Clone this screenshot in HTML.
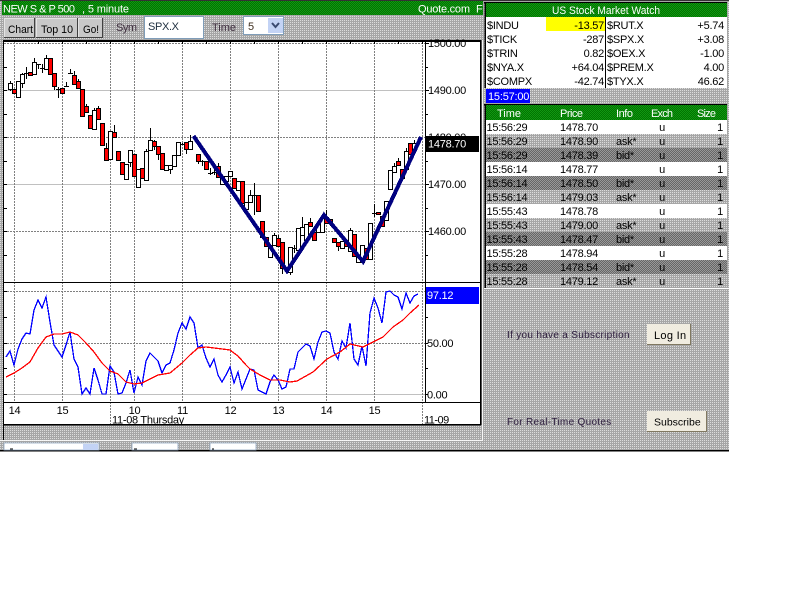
<!DOCTYPE html>
<html><head><meta charset="utf-8"><title>NEW S &amp; P 500</title>
<style>
html,body{margin:0;padding:0;background:#fff;width:800px;height:600px;overflow:hidden}
svg{display:block;position:absolute;left:0;top:0}
text{font-family:"Liberation Sans",sans-serif;font-size:11px;fill:#000}
.w{fill:#fff}
.r{text-anchor:end}
.m{text-anchor:middle}
.t text{letter-spacing:-.25px}
</style></head><body>
<svg width="800" height="600" viewBox="0 0 800 600">
<defs>
<pattern id="g" width="2" height="2" patternUnits="userSpaceOnUse"><rect width="2" height="2" fill="#a6a6a6"/><rect width="1" height="1" fill="#dcdcdc"/></pattern>
<pattern id="d" width="2" height="2" patternUnits="userSpaceOnUse"><rect width="2" height="2" fill="#666"/><rect width="1" height="1" fill="#999"/><rect x="1" y="1" width="1" height="1" fill="#999"/></pattern>
<pattern id="gr" width="2" height="2" patternUnits="userSpaceOnUse"><rect width="2" height="2" fill="#007400"/><rect width="1" height="1" fill="#129612"/><rect x="1" y="1" width="1" height="1" fill="#129612"/></pattern>
<clipPath id="pc"><rect x="4" y="41" width="476" height="383"/></clipPath>
</defs>

<rect width="729" height="451" fill="url(#g)"/>
<rect y="450" width="729" height="1.5" fill="#000"/>
<rect x="0" y="0" width="729" height="1" fill="#333"/>

<!-- top bar -->
<rect x="2" y="1" width="481" height="14" fill="url(#gr)"/>
<text class="w" x="3" y="12.5" textLength="72" lengthAdjust="spacing">NEW S &amp; P 500</text>
<text class="w" x="82" y="12.5" textLength="47" lengthAdjust="spacing">, 5 minute</text>
<text class="w" x="418" y="12.5" textLength="52" lengthAdjust="spacing">Quote.com</text>
<text class="w" x="476" y="12.5">F</text>

<!-- toolbar buttons -->
<g stroke="none">
<rect x="4" y="18" width="31" height="20" fill="#404040"/><rect x="4" y="18" width="30" height="19" fill="#e4e4e4"/><rect x="5" y="19" width="29" height="18" fill="#c8c8c8"/>
<rect x="36" y="18" width="42" height="20" fill="#404040"/><rect x="36" y="18" width="41" height="19" fill="#e4e4e4"/><rect x="37" y="19" width="40" height="18" fill="#c8c8c8"/>
<rect x="78" y="18" width="25" height="20" fill="#404040"/><rect x="78" y="18" width="24" height="19" fill="#e4e4e4"/><rect x="79" y="19" width="23" height="18" fill="#c8c8c8"/>
</g>
<text x="8" y="33" textLength="25" lengthAdjust="spacingAndGlyphs">Chart</text>
<text x="41" y="33" textLength="32" lengthAdjust="spacingAndGlyphs">Top 10</text>
<text x="83" y="33" textLength="16" lengthAdjust="spacingAndGlyphs">Go!</text>
<text x="116" y="31" style="fill:#403040" textLength="21" lengthAdjust="spacing">Sym</text>
<rect x="144.5" y="16.5" width="59" height="22" fill="#fff" stroke="#7f9db9"/>
<text x="148" y="30" style="fill:#203040" textLength="31" lengthAdjust="spacing">SPX.X</text>
<text x="212" y="31" style="fill:#403040" textLength="24" lengthAdjust="spacing">Time</text>
<rect x="243.5" y="16.5" width="40" height="18" fill="#fff" stroke="#7f9db9"/>
<text x="248" y="30" style="fill:#403020">5</text>
<rect x="268" y="18" width="15" height="15" fill="#c3d3f5"/>
<path d="M272 23l3.5 4 3.5-4" fill="none" stroke="#3a4a70" stroke-width="2"/>

<!-- chart -->
<rect x="3" y="40" width="478" height="385" fill="#fff"/>
<rect x="3" y="40" width="1" height="400" fill="#000"/>
<rect x="3" y="40" width="478" height="2" fill="#000"/>
<rect x="480" y="40" width="1.5" height="385" fill="#000"/>
<rect x="425" y="40" width="1" height="362" fill="#000"/>

<!-- grid -->
<g fill="none" stroke="#c0c0c0" stroke-width="1">
<path d="M4 90.5H425M4 184.5H425M4 394.5H425"/>
</g>
<g fill="none" stroke="#808080" stroke-width="1" stroke-dasharray="2 1">
<path d="M4 43.5H425M4 137.5H425M4 231.5H425M4 291.5H425M4 343.5H425"/>
<path d="M14.5 42V402M62.5 42V402M110.5 42V424M134.5 42V402M182.5 42V402M230.5 42V402M278.5 42V402M326.5 42V402M374.5 42V402M422.5 42V424"/>
</g>
<!-- axis ticks -->
<path d="M425 43.5h4M425 67.5h3M425 90.5h4M425 114.5h3M425 137.5h4M425 161.5h3M425 184.5h4M425 208.5h3M425 231.5h4M425 255.5h3M425 291.5h3M425 317.5h3M425 343.5h3M425 368.5h3M425 394.5h3M4 67.5h3M4 90.5h3M4 114.5h3M4 137.5h3M4 161.5h3M4 184.5h3M4 208.5h3M4 231.5h3M4 255.5h3M4 291.5h3M4 317.5h3M4 343.5h3M4 368.5h3M4 394.5h3M38.5 42v2M62.5 42v2M86.5 42v2M110.5 42v2M134.5 42v2M158.5 42v2M182.5 42v2M206.5 42v2M230.5 42v2M254.5 42v2M278.5 42v2M302.5 42v2M326.5 42v2M350.5 42v2M374.5 42v2M398.5 42v2M422.5 42v2" stroke="#000" fill="none"/>

<!-- wicks -->
<path fill="none" stroke="#000" d="M10.5 81V91M22.5 73V88M34.5 58V62M46.5 55V58M54.5 86V90M74.5 71V75M78.5 79V81M86.5 104V106M94.5 108V110M98.5 106V108M106.5 143V148M114.5 125V132M130.5 162V167M146.5 149V151M150.5 128V140M154.5 140V150M158.5 154V160M170.5 169V174M186.5 149V154M190.5 135V141M198.5 161V164M218.5 163V166M250.5 190V195M274.5 233V235M278.5 235V238M282.5 268V274M290.5 272V275M302.5 217V227M310.5 218V222M326.5 210V217M330.5 223V226M338.5 246V251M350.5 228V230M394.5 163V166M398.5 158V161M406.5 148V151M414.5 140V143M418.5 138V143M26.5 67V79M38.5 64V69M42.5 64V73M58.5 87V98M66.5 82V87M70.5 69V73M182.5 143V145M202.5 160V166M210.5 168V175M214.5 168V175M254.5 183V215M294.5 245V253M374.5 204V217M24 73.5H29M36 64.5H41M40 68.5H45M56 89.5H61M64 86.5H69M68 73.5H73M180 144.5H185M200 161.5H205M208 173.5H213M212 172.5H217M252 195.5H257M292 248.5H297M372 213.5H377"/>

<!-- white candles -->
<path fill="#fff" stroke="#000" d="M8.5 83.5h4v6h-4zM16.5 81.5h4v16h-4zM20.5 74.5h4v9h-4zM32.5 62.5h4v12h-4zM44.5 58.5h4v11h-4zM92.5 110.5h4v19h-4zM108.5 131.5h4v28h-4zM124.5 164.5h4v15h-4zM128.5 150.5h4v12h-4zM136.5 169.5h4v18h-4zM144.5 151.5h4v29h-4zM148.5 140.5h4v10h-4zM164.5 165.5h4v5h-4zM168.5 165.5h4v4h-4zM172.5 155.5h4v11h-4zM176.5 142.5h4v13h-4zM188.5 141.5h4v8h-4zM220.5 176.5h4v8h-4zM224.5 176.5h4v5h-4zM228.5 171.5h4v5h-4zM236.5 181.5h4v9h-4zM244.5 202.5h4v7h-4zM248.5 195.5h4v7h-4zM268.5 245.5h4v12h-4zM272.5 235.5h4v10h-4zM288.5 247.5h4v25h-4zM296.5 228.5h4v22h-4zM300.5 227.5h4v8h-4zM304.5 224.5h4v16h-4zM316.5 223.5h4v9h-4zM320.5 218.5h4v14h-4zM340.5 241.5h4v7h-4zM348.5 230.5h4v21h-4zM356.5 256.5h4v6h-4zM360.5 245.5h4v17h-4zM368.5 223.5h4v36h-4zM384.5 201.5h4v19h-4zM388.5 170.5h4v19h-4zM392.5 166.5h4v6h-4zM404.5 151.5h4v18h-4zM412.5 143.5h4v7h-4z"/>
<!-- red candles -->
<path fill="#f00" stroke="#000" d="M12.5 89.5h4v4h-4zM28.5 72.5h4v3h-4zM48.5 58.5h4v16h-4zM52.5 73.5h4v13h-4zM60.5 88.5h4v5h-4zM72.5 75.5h4v9h-4zM76.5 81.5h4v7h-4zM80.5 89.5h4v27h-4zM84.5 106.5h4v6h-4zM88.5 115.5h4v13h-4zM96.5 108.5h4v11h-4zM100.5 123.5h4v22h-4zM104.5 148.5h4v12h-4zM112.5 132.5h4v5h-4zM116.5 151.5h4v9h-4zM120.5 162.5h4v12h-4zM132.5 154.5h4v22h-4zM140.5 168.5h4v10h-4zM152.5 141.5h4v5h-4zM156.5 146.5h4v8h-4zM160.5 153.5h4v16h-4zM184.5 142.5h4v7h-4zM196.5 154.5h4v7h-4zM204.5 161.5h4v8h-4zM216.5 166.5h4v11h-4zM232.5 178.5h4v10h-4zM240.5 181.5h4v22h-4zM256.5 195.5h4v16h-4zM260.5 221.5h4v16h-4zM264.5 237.5h4v9h-4zM276.5 238.5h4v8h-4zM280.5 242.5h4v26h-4zM308.5 222.5h4v4h-4zM312.5 232.5h4v8h-4zM324.5 217.5h4v6h-4zM328.5 219.5h4v4h-4zM332.5 238.5h4v4h-4zM336.5 242.5h4v4h-4zM344.5 241.5h4v5h-4zM352.5 234.5h4v22h-4zM364.5 248.5h4v11h-4zM376.5 212.5h4v2h-4zM380.5 216.5h4v10h-4zM396.5 161.5h4v4h-4zM400.5 169.5h4v9h-4zM408.5 143.5h4v11h-4z"/>

<!-- trend line -->
<path d="M193.5 136L287 271L324 215L363 261.5L421 137" fill="none" stroke="#000080" stroke-width="4" stroke-linejoin="miter" shape-rendering="crispEdges"/>

<!-- divider lines -->
<rect x="4" y="282" width="476" height="1" fill="#000"/>
<rect x="4" y="402" width="476" height="1" fill="#000"/>

<!-- RSI -->
<polyline fill="none" stroke="#00f" stroke-width="1.3" shape-rendering="crispEdges" points="6,357 10,351 14,365 18,349 22,339 26,333 30,334 34,310 38,300 42,308 46,297 50,322 54,345 58,351 62,357 66,345 70,332 74,359 78,367 82,394 86,388 90,394 94,368 98,380 102,394 106,394 110,366 114,372 118,394 122,393 126,383 130,370 134,393 138,377 142,385 146,361 150,353 154,357 158,361 162,373 166,365 170,363 174,350 178,333 182,323 186,329 190,317 194,323 198,348 202,345 206,358 210,367 214,359 218,375 222,382 226,375 230,367 234,383 238,372 242,389 246,379 250,369 254,370 258,390 262,392 266,394 270,382 274,375 278,380 282,389 286,387 290,369 294,369 298,352 302,348 306,344 310,346 314,359 318,342 322,332 326,331 330,333 334,352 338,359 342,341 346,348 350,323 354,359 358,365 362,346 366,366 370,313 374,298 378,308 382,323 386,292 390,291 394,295 398,297 402,309 406,293 410,303 414,296 418,294"/>
<polyline fill="none" stroke="#f00" stroke-width="1.3" shape-rendering="crispEdges" points="6,377 14,373 22,368 30,362 38,348 46,337 54,334 62,334 70,332 78,335 86,343 94,352 102,363 110,371 118,374 126,382 134,384 142,383 150,379 158,375 170,373 182,363 190,355 198,348 206,347 214,348 222,349 230,350 238,356 246,365 250,369 260,375 270,380 280,380 290,382 297,381 313,372 327,359 340,352 350,344 363,347 373,342 383,337 393,327 403,320 410,313 419,305"/>

<!-- price axis text -->
<g class="t">
<text x="428" y="47">1500.00</text>
<text x="428" y="94">1490.00</text>
<text x="428" y="141">1480.00</text>
<rect x="426" y="136" width="53" height="16" fill="#000"/>
<text class="w" x="428" y="147.5">1478.70</text>
<text x="428" y="188">1470.00</text>
<text x="428" y="235">1460.00</text>
<rect x="426" y="287" width="53" height="17" fill="#00f"/>
<text class="w" x="427" y="299">97.12</text>
<text x="427" y="347">50.00</text>
<text x="427" y="398.5">0.00</text>
<text class="m" x="14.5" y="414">14</text>
<text class="m" x="62.5" y="414">15</text>
<text class="m" x="134.5" y="414">10</text>
<text class="m" x="182.5" y="414">11</text>
<text class="m" x="230.5" y="414">12</text>
<text class="m" x="278.5" y="414">13</text>
<text class="m" x="326.5" y="414">14</text>
<text class="m" x="374.5" y="414">15</text>
<g clip-path="url(#pc)">
<text x="112" y="423.5" textLength="72" lengthAdjust="spacing">11-08 Thursday</text>
<text x="424" y="423.5" textLength="25" lengthAdjust="spacing">11-09</text>
</g>
</g>
<rect x="3" y="424" width="478" height="1.5" fill="#000"/>

<!-- chart white frame -->
<path d="M482.5 40V440.5H0" fill="none" stroke="#fff" stroke-opacity=".85"/>
<path d="M4 443h95v7H4zM132 443h46v7h-46zM210 443h46v7h-46z" fill="#fff" stroke="#8fa5c0" stroke-width=".8"/>
<rect x="83" y="444" width="15" height="6" fill="#c3d3f5"/>
<path d="M10 449h3M134 449h3M212 449h2" stroke="#000"/>

<!-- Market watch -->
<rect x="484" y="2" width="243" height="1.5" fill="#000"/>
<rect x="484.5" y="2" width="2" height="86" fill="#000"/>
<rect x="486" y="3" width="241" height="14" fill="url(#gr)"/>
<rect x="486" y="17" width="241" height="71" fill="#fff"/>
<rect x="546" y="17" width="59" height="14" fill="#ff0"/>
<rect x="605" y="17" width="1" height="71" fill="#000"/>
<text class="w" x="552" y="14" textLength="108" lengthAdjust="spacingAndGlyphs">US Stock Market Watch</text>
<g class="t">
<text x="487" y="29">$INDU</text><text class="r" x="604" y="29">-13.57</text><text x="607" y="29">$RUT.X</text><text class="r" x="724" y="29">+5.74</text>
<text x="487" y="43">$TICK</text><text class="r" x="604" y="43">-287</text><text x="607" y="43">$SPX.X</text><text class="r" x="724" y="43">+3.08</text>
<text x="487" y="57">$TRIN</text><text class="r" x="604" y="57">0.82</text><text x="607" y="57">$OEX.X</text><text class="r" x="724" y="57">-1.00</text>
<text x="487" y="71">$NYA.X</text><text class="r" x="604" y="71">+64.04</text><text x="607" y="71">$PREM.X</text><text class="r" x="724" y="71">4.00</text>
<text x="487" y="85">$COMPX</text><text class="r" x="604" y="85">-42.74</text><text x="607" y="85">$TYX.X</text><text class="r" x="724" y="85">46.62</text>
</g>
<rect x="486" y="89" width="44" height="14" fill="#00f"/>
<text class="w" x="488" y="100" style="letter-spacing:-.2px">15:57:00</text>

<!-- Time and sales -->
<rect x="484" y="104" width="243" height="1.5" fill="#000"/>
<rect x="484.5" y="104" width="2" height="184" fill="#000"/>
<rect x="486" y="105" width="241" height="15" fill="url(#gr)"/>
<text class="w" x="497" y="117" textLength="24" lengthAdjust="spacing">Time</text><text class="w" x="560" y="117" textLength="23" lengthAdjust="spacing">Price</text><text class="w" x="616" y="117" textLength="17" lengthAdjust="spacing">Info</text><text class="w" x="651" y="117" textLength="22" lengthAdjust="spacing">Exch</text><text class="w" x="697" y="117" textLength="19" lengthAdjust="spacing">Size</text>
<rect x="486" y="120" width="241" height="14" fill="#fff"/>
<rect x="486" y="134" width="241" height="14" fill="url(#g)"/>
<rect x="486" y="148" width="241" height="14" fill="url(#d)"/>
<rect x="486" y="162" width="241" height="14" fill="#fff"/>
<rect x="486" y="176" width="241" height="14" fill="url(#d)"/>
<rect x="486" y="190" width="241" height="14" fill="url(#g)"/>
<rect x="486" y="204" width="241" height="14" fill="#fff"/>
<rect x="486" y="218" width="241" height="14" fill="url(#g)"/>
<rect x="486" y="232" width="241" height="14" fill="url(#d)"/>
<rect x="486" y="246" width="241" height="14" fill="#fff"/>
<rect x="486" y="260" width="241" height="14" fill="url(#d)"/>
<rect x="486" y="274" width="241" height="14" fill="url(#g)"/>
<rect x="484" y="288" width="245" height="1" fill="#fff"/>
<g class="t">
<text x="486.5" y="131">15:56:29</text><text x="560" y="131">1478.70</text><text class="m" x="662" y="131">u</text><text class="r" x="723" y="131">1</text>
<text x="486.5" y="145">15:56:29</text><text x="560" y="145">1478.90</text><text x="616" y="145">ask*</text><text class="m" x="662" y="145">u</text><text class="r" x="723" y="145">1</text>
<text x="486.5" y="159">15:56:29</text><text x="560" y="159">1478.39</text><text x="616" y="159">bid*</text><text class="m" x="662" y="159">u</text><text class="r" x="723" y="159">1</text>
<text x="486.5" y="173">15:56:14</text><text x="560" y="173">1478.77</text><text class="m" x="662" y="173">u</text><text class="r" x="723" y="173">1</text>
<text x="486.5" y="187">15:56:14</text><text x="560" y="187">1478.50</text><text x="616" y="187">bid*</text><text class="m" x="662" y="187">u</text><text class="r" x="723" y="187">1</text>
<text x="486.5" y="201">15:56:14</text><text x="560" y="201">1479.03</text><text x="616" y="201">ask*</text><text class="m" x="662" y="201">u</text><text class="r" x="723" y="201">1</text>
<text x="486.5" y="215">15:55:43</text><text x="560" y="215">1478.78</text><text class="m" x="662" y="215">u</text><text class="r" x="723" y="215">1</text>
<text x="486.5" y="229">15:55:43</text><text x="560" y="229">1479.00</text><text x="616" y="229">ask*</text><text class="m" x="662" y="229">u</text><text class="r" x="723" y="229">1</text>
<text x="486.5" y="243">15:55:43</text><text x="560" y="243">1478.47</text><text x="616" y="243">bid*</text><text class="m" x="662" y="243">u</text><text class="r" x="723" y="243">1</text>
<text x="486.5" y="257">15:55:28</text><text x="560" y="257">1478.94</text><text class="m" x="662" y="257">u</text><text class="r" x="723" y="257">1</text>
<text x="486.5" y="271">15:55:28</text><text x="560" y="271">1478.54</text><text x="616" y="271">bid*</text><text class="m" x="662" y="271">u</text><text class="r" x="723" y="271">1</text>
<text x="486.5" y="285">15:55:28</text><text x="560" y="285">1479.12</text><text x="616" y="285">ask*</text><text class="m" x="662" y="285">u</text><text class="r" x="723" y="285">1</text>
</g>

<!-- Subscription -->
<text x="507" y="338" style="font-size:10px;fill:#302040;letter-spacing:.3px">If you have a Subscription</text>
<text x="507" y="425" style="font-size:10px;fill:#302040;letter-spacing:.3px">For Real-Time Quotes</text>
<rect x="647" y="324" width="44" height="21" fill="#807860"/>
<rect x="647" y="324" width="43" height="20" fill="#f0ece0"/>
<text x="654" y="339" style="font-size:11px;letter-spacing:.3px">Log In</text>
<rect x="647" y="411" width="60" height="21" fill="#807860"/>
<rect x="647" y="411" width="59" height="20" fill="#f0ece0"/>
<text x="654" y="425.5" style="font-size:10.5px">Subscribe</text>
</svg>
</body></html>
